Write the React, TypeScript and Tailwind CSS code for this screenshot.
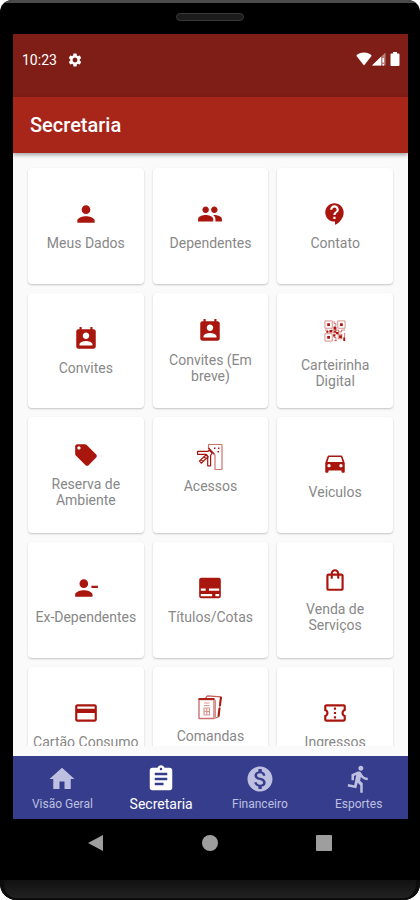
import type { ComponentType } from 'react';
import { useState } from 'react';
import {
  MdAssignment,
  MdContactSupport,
  MdCreditCard,
  MdDirectionsCar,
  MdDirectionsRun,
  MdHome,
  MdLocalOffer,
  MdMonetizationOn,
  MdOutlineConfirmationNumber,
  MdOutlineShoppingBag,
  MdPeople,
  MdPermContactCalendar,
  MdPerson,
  MdPersonRemove,
  MdSettings,
} from 'react-icons/md';

type IconType = ComponentType<{ className?: string }>;

type Tile = {
  label: string;
  icon: IconType;
  iconBox?: string;
  extra?: string;
};

function QrIcon({ className }: { className?: string }) {
  return (
    <svg viewBox="0 0 24 24" className={className} fill="none" stroke="currentColor" strokeWidth="1">
      <path d="M1 1h8v8H1zM15 1h8v8h-8zM1 15h8v8H1z" opacity="0.5" />
      <path d="M3.500 3.500h3v3h-3zM17.500 3.500h3v3h-3zM3.500 17.500h3v3h-3z" fill="currentColor" stroke="none" />
      <path d="M11 1v3h2v3h-2v3M1 11h3v2h3v-2h3v3h3v-3h3v2h3v-2h4M11 16v3h2v4M15.500 15.500h4v5h-4zM22.500 14v9M11 22.500h3" opacity="0.6" />
      <path d="M10.500 7.500h3v3h-3zM13 13h3v2.500h-3zM16.500 16.500h3v3h-3zM6 11h3v2.500H6zM10 15.500h2.500V18H10zM21 19h2v4h-2zM2.500 12h2v2h-2zM11 11.500h2v2h-2z" fill="currentColor" stroke="none" />
    </svg>
  );
}

function TurnstileIcon({ className }: { className?: string }) {
  return (
    <svg viewBox="0 0 26 26" className={className} fill="none" stroke="currentColor" strokeLinejoin="round">
      <path
        d="M11.500 5V1.200q0-.7.7-.7h12.100q.7 0 .7.700v23.600q0 .7-.7.700h-5.600q-.7 0-.7-.700V10.500"
        strokeWidth="1.200"
        opacity="0.6"
      />
      <path d="M11.500 4l6 6.500" strokeWidth="1.400" />
      <path d="M17 3.500h1.500V5H17zM21 3.500h1.500V5H21zM20.500 7H22v1.500h-1.500z" fill="currentColor" stroke="none" />
      <path d="M.600 7.300h10.500l1-1.300 3 3-1.500 2.500v10.300h-2.900V12.500l-2-2.200H.600z" strokeWidth="1.200" />
      <path d="M9.500 10.500l-7 6.500 1.700 2.200 7-6.400zM4 15.700l2 2M7 12.700l2 2" strokeWidth="1.200" />
    </svg>
  );
}

function TicketsIcon({ className }: { className?: string }) {
  return (
    <svg viewBox="0 0 26 26" className={className} fill="none" stroke="currentColor" strokeLinejoin="round">
      <path d="M2 5.500h15v19H2z" strokeWidth="1.400" opacity="0.6" />
      <path d="M1.500 5h16" strokeWidth="1.800" />
      <path d="M8.500 4l2-2.200 13.500 1-2.300 20-3.700 1.500" strokeWidth="1.200" opacity="0.7" />
      <path d="M24 2.800l-1.100 9M22.500 14l-1 8.500" strokeWidth="2" />
      <path d="M18.500 6v17" strokeWidth="1" opacity="0.5" />
      <path d="M7 9h5.500M7 11.500h5.500M7 14h5.500v7H7zM9.800 14v7M7 17.500h5.500" strokeWidth="1.200" opacity="0.45" />
    </svg>
  );
}

function TitlesIcon({ className }: { className?: string }) {
  return (
    <svg viewBox="0 0 24 24" className={className} fill="currentColor" fillRule="evenodd">
      <path d="M4 2.500h16a2 2 0 0 1 2 2v15a2 2 0 0 1-2 2H4a2 2 0 0 1-2-2v-15a2 2 0 0 1 2-2zM3.500 12.500v2H8v-2zM11 12.500v2h9.500v-2zM3.500 17.500v2H14v-2zM17 17.500v2h3.500v-2z" />
    </svg>
  );
}

const tiles: Tile[] = [
  { label: 'Meus Dados', icon: MdPerson },
  { label: 'Dependentes', icon: MdPeople },
  { label: 'Contato', icon: MdContactSupport },
  { label: 'Convites', icon: MdPermContactCalendar },
  { label: 'Convites (Em breve)', icon: MdPermContactCalendar },
  { label: 'Carteirinha Digital', icon: QrIcon, iconBox: 'h-9' },
  { label: 'Reserva de Ambiente', icon: MdLocalOffer },
  { label: 'Acessos', icon: TurnstileIcon, extra: 'pb-3' },
  { label: 'Veiculos', icon: MdDirectionsCar },
  { label: 'Ex-Dependentes', icon: MdPersonRemove },
  { label: 'Títulos/Cotas', icon: TitlesIcon },
  { label: 'Venda de Serviços', icon: MdOutlineShoppingBag },
  { label: 'Cartão Consumo', icon: MdCreditCard },
  { label: 'Comandas', icon: TicketsIcon, extra: 'pb-3' },
  { label: 'Ingressos', icon: MdOutlineConfirmationNumber },
];

const tabs: { label: string; icon: IconType }[] = [
  { label: 'Visão Geral', icon: MdHome },
  { label: 'Secretaria', icon: MdAssignment },
  { label: 'Financeiro', icon: MdMonetizationOn },
  { label: 'Esportes', icon: MdDirectionsRun },
];

function StatusBar() {
  return (
    <div className="h-[63px] shrink-0 bg-[#7f1d17] flex items-start justify-between pl-[9px] pr-2 pt-4 text-white">
      <div className="flex items-center gap-[10px] h-5">
        <span className="text-sm">10:23</span>
        <MdSettings className="size-4" />
      </div>
      <div className="flex items-center h-[18px]">
        <svg viewBox="0 0 16 14" className="w-4 h-[14px]" fill="currentColor">
          <path d="M8 13.500L.3 3.800C2.300 1.800 5 .6 8 .6s5.700 1.200 7.700 3.200z" />
        </svg>
        <svg viewBox="0 0 14 14" className="w-[14px] h-[14px]" fill="currentColor">
          <path d="M0 13.500L13.500.5v13z" opacity="0.450" />
          <path d="M0 13.500L9 4.800v8.700z" />
          <path d="M10.500 6h1.500v4.500h-1.500zM10.500 12h1.500v1.500h-1.500z" />
        </svg>
        <svg viewBox="0 0 10 14" className="w-[10px] h-[14px] ml-1" fill="currentColor">
          <path d="M3 0h4v1.500h1.500q1 0 1 1v10.500q0 1-1 1h-7q-1 0-1-1V2.500q0-1 1-1H3z" />
        </svg>
      </div>
    </div>
  );
}

export default function App() {
  const [activeTab, setActiveTab] = useState('Secretaria');

  return (
    <div className="h-screen bg-white font-[Roboto,sans-serif]">
      <div className="h-full flex flex-col bg-black rounded-t-[12px] rounded-b-[16px] overflow-hidden">
        {/* Speaker */}
        <div className="h-[34px] shrink-0 border-t-[3px] border-[#4b4b4b] flex justify-center pt-[10px]">
          <div className="w-[68px] h-2 rounded-full bg-[#1c1c1c] border border-[#383838]" />
        </div>

        <div className="flex-1 min-h-0 flex flex-col ml-[13px] mr-3">
          <StatusBar />

          <header className="relative z-10 h-14 shrink-0 bg-[#a8251a] flex items-center px-[17px] shadow-[0_2px_4px_rgba(0,0,0,0.35)]">
            <h1 className="text-xl font-medium text-white">Secretaria</h1>
          </header>

          {/* Tiles */}
          <main className="flex-1 min-h-0 bg-[#fafafa] pb-[10px] flex flex-col">
            <div className="flex-1 min-h-0 overflow-y-auto [scrollbar-width:none]">
              <div className="grid grid-cols-3 gap-[9px] p-[15px]">
                {tiles.map(({ label, icon: Icon, iconBox, extra }) => (
                  <button
                    key={label}
                    type="button"
                    className={`aspect-square min-w-0 bg-white rounded-[4px] shadow-[0_1px_2px_rgba(0,0,0,0.22)] flex flex-col items-center justify-center gap-2 ${extra ?? ''}`}
                  >
                    <span className={`flex items-center text-[#a9160e] ${iconBox ?? ''}`}>
                      <Icon className={iconBox ? 'size-[22px]' : 'size-[26px]'} />
                    </span>
                    <span className="px-1 text-sm leading-4 text-[#888888] text-center max-w-full">{label}</span>
                  </button>
                ))}
              </div>
            </div>
          </main>

          {/* Bottom tabs */}
          <nav className="h-[63px] shrink-0 bg-[#363d8c] grid grid-cols-4">
            {tabs.map(({ label, icon: Icon }) => (
              <button
                key={label}
                type="button"
                onClick={() => setActiveTab(label)}
                className={`flex flex-col items-center pt-2 ${activeTab === label ? 'text-white' : 'text-[#bdc0e0]'}`}
              >
                <Icon className="size-[30px]" />
                <span className={`leading-5 whitespace-nowrap ${activeTab === label ? 'text-sm' : 'text-xs'}`}>{label}</span>
              </button>
            ))}
          </nav>
        </div>

        {/* System buttons */}
        <div className="h-[61px] shrink-0 flex justify-center gap-[98px] pt-4 text-[#9e9e9e]">
          <button type="button" aria-label="Voltar" className="size-4">
            <svg viewBox="0 0 16 16" className="size-4" fill="currentColor">
              <path d="M0 8L15 0v16z" />
            </svg>
          </button>
          <button type="button" aria-label="Início" className="size-4 rounded-full bg-[#9e9e9e]" />
          <button type="button" aria-label="Recentes" className="size-4 rounded-[1px] bg-[#9e9e9e]" />
        </div>
        <div className="h-5 shrink-0 bg-linear-to-b from-[#111111] to-[#222222] border-x-4 border-b-2 border-[#0c0c0c] rounded-b-[16px]" />
      </div>
    </div>
  );
}
